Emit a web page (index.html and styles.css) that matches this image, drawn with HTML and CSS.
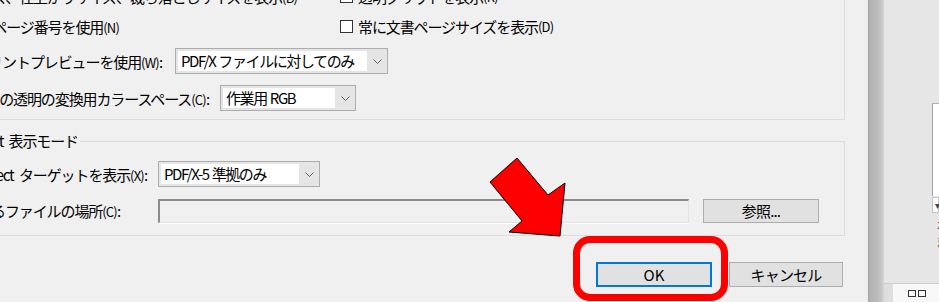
FILE: index.html
```html
<!DOCTYPE html>
<html lang="ja">
<head>
  <meta charset="UTF-8">
  <meta name="viewport" content="width=device-width, initial-scale=1.0">
  <title>環境設定 - ページ表示</title>
  <link rel="stylesheet" href="styles.css">
</head>
<body>
  <div class="screen">
    <div class="dialog">

      <!-- Page content and information -->
      <div class="group group-page">
        <div class="row row-first">
          <div class="col-left">
            <span class="fit fit-size">アートサイズ、仕上がりサイズ、裁ち落としサイズを表示<span class="key">(B)</span></span>
          </div>
          <label class="check"><span class="box"></span>透明グリッドを表示<span class="key">(R)</span></label>
        </div>
        <div class="row row-second">
          <div class="col-left">
            <span class="fit fit-page">論理ページ番号を使用<span class="key">(N)</span></span>
          </div>
          <label class="check"><span class="box"></span>常に文書ページサイズを表示<span class="key">(D)</span></label>
        </div>
        <div class="row row-combo">
          <span class="fit fit-overprint">オーバープリントプレビューを使用<span class="key">(W)</span> :</span>
          <div class="combo combo-overprint">
            <div class="combo-value">PDF/X ファイルに対してのみ</div>
            <div class="combo-arrow"><svg width="9" height="5" viewBox="0 0 9 5"><path d="M0.5 0.5 L4.5 4.5 L8.5 0.5" fill="none" stroke="#606060"/></svg></div>
          </div>
        </div>
        <div class="row row-combo">
          <span class="fit fit-blend">デフォルトの透明の変換用カラースペース<span class="key">(C)</span> :</span>
          <div class="combo combo-blend">
            <div class="combo-value">作業用 RGB</div>
            <div class="combo-arrow"><svg width="9" height="5" viewBox="0 0 9 5"><path d="M0.5 0.5 L4.5 4.5 L8.5 0.5" fill="none" stroke="#606060"/></svg></div>
          </div>
        </div>
      </div>

      <!-- Reference XObject -->
      <fieldset class="group group-xobject">
        <legend><span class="fit fit-legend">Reference XObject 表示モード</span></legend>
        <div class="row row-combo row-target">
          <span class="fit fit-target">Reference XObject ターゲットを表示<span class="key">(X)</span> :</span>
          <div class="combo combo-target">
            <div class="combo-value">PDF/X-5 準拠のみ</div>
            <div class="combo-arrow"><svg width="9" height="5" viewBox="0 0 9 5"><path d="M0.5 0.5 L4.5 4.5 L8.5 0.5" fill="none" stroke="#606060"/></svg></div>
          </div>
        </div>
        <div class="row row-path">
          <span class="fit fit-path">参照されるファイルの場所<span class="key">(C)</span> :</span>
          <div class="textbox"></div>
          <button class="btn btn-browse">参照...</button>
        </div>
      </fieldset>

      <div class="actions">
        <button class="btn btn-ok">OK</button>
        <button class="btn btn-cancel">キャンセル</button>
      </div>

      <!-- annotation -->
      <div class="highlight"></div>
      <svg class="arrow" width="90" height="90" viewBox="485 153 90 90">
        <polygon points="517,158 548,195 565,183 560,236 509,232 522,221 490,182" fill="#ff0000" stroke="#000" stroke-width="1" stroke-linejoin="miter"/>
      </svg>
    </div>

    <div class="splitter"></div>

    <div class="side">
      <div class="side-main">
        <div class="side-list"></div>
        <div class="side-combo">▾</div>
        <div class="side-text">え</div>
        <div class="side-text">ま</div>
      </div>
      <div class="side-foot">
        <div class="side-gap"></div>
        <div class="side-tab"><span class="tab-sq"></span><span class="tab-sq"></span></div>
      </div>
    </div>
  </div>
</body>
</html>
```

FILE: styles.css
```css
/* Reset */
* {
  box-sizing: border-box;
}

body {
  margin: 0;
  background: #f0f0f0;
  font-family: "Noto Sans CJK JP", "Noto Sans", sans-serif;
  font-size: 15px;
  color: #000;
  overflow: hidden;
}

.screen {
  display: flex;
  height: 302px;
}

/* Dialog */
.dialog {
  position: relative;
  width: 868px;
  flex: none;
  overflow: hidden;
  background: #f0f0f0;
}

.row {
  display: flex;
  align-items: center;
  white-space: nowrap;
  letter-spacing: -1.1px;
  word-spacing: 3px;
}

/* label text that keeps its end in place and overflows to the left */
.fit {
  display: flex;
  justify-content: flex-end;
  align-items: baseline;
  flex: none;
  white-space: nowrap;
}

.key {
  font-size: 13px;
  letter-spacing: -0.8px;
}

/* Group: page content */
.group-page {
  width: 845px;
  margin-top: -15px;
  padding-bottom: 8px;
  border-right: 1px solid #dcdcdc;
  border-bottom: 1px solid #dcdcdc;
}

.row-first {
  height: 22px;
}

.row-second {
  height: 22px;
  margin-top: 8px;
}

.row-combo {
  height: 26px;
  margin-top: 11px;
}

.col-left {
  width: 340px;
  flex: none;
}

.fit-size { width: 297px; }
.fit-page { width: 119px; }
.fit-overprint { width: 175px; padding-right: 13px; }
.fit-blend { width: 220px; padding-right: 11px; }

.check {
  display: flex;
  align-items: center;
}

.box {
  width: 13px;
  height: 13px;
  margin-right: 5px;
  border: 1px solid #333;
  background: #fff;
  flex: none;
}

/* Combo box */
.combo {
  display: flex;
  height: 26px;
  border: 1px solid #adadad;
  background: #e5e5e5;
  padding: 2px 0 2px 2px;
  flex: none;
}

.combo-value {
  flex: 1;
  background: #fff;
  padding-left: 3px;
  line-height: 20px;
  overflow: hidden;
  letter-spacing: -1.4px;
  word-spacing: 1px;
}

.combo-arrow {
  width: 20px;
  display: flex;
  align-items: center;
  justify-content: center;
}

.combo-overprint { width: 213px; }
.combo-blend { width: 136px; }
.combo-target { width: 162px; }

/* Group: Reference XObject */
.group-xobject {
  width: 845px;
  margin: 13px 0 0;
  padding: 0 0 12px;
  border: 1px solid #dcdcdc;
  border-left: none;
  min-inline-size: 0;
}

.group-xobject legend {
  padding: 0 2px 0 0;
  line-height: 16px;
  letter-spacing: -1.1px;
  word-spacing: 3px;
}

.fit-legend { width: 78px; }

.row-target {
  margin-top: 12px;
}

.fit-target { width: 158px; padding-right: 11px; }

.row-path {
  height: 25px;
  margin-top: 11px;
}

.fit-path { width: 158px; padding-right: 38px; }

.textbox {
  width: 531px;
  height: 24px;
  border-top: 2px solid #8a8a8a;
  border-left: 2px solid #8a8a8a;
  border-right: 1px solid #e3e3e3;
  border-bottom: 1px solid #e3e3e3;
  background: #f0f0f0;
  box-shadow: 0 1px 0 #fff;
}

/* Buttons */
.btn {
  height: 25px;
  padding: 0;
  border: 1px solid #adadad;
  background: #e1e1e1;
  font: inherit;
  color: #000;
  letter-spacing: -0.8px;
}

.btn-browse {
  width: 116px;
  height: 24px;
  margin-left: 14px;
}

.actions {
  display: flex;
  justify-content: flex-end;
  gap: 17px;
  margin-top: 26px;
  padding-right: 25px;
}

.btn-ok {
  width: 116px;
  border: 2px solid #0078d7;
  letter-spacing: 0;
}

.btn-cancel {
  width: 114px;
}

/* Red annotation */
.highlight {
  position: absolute;
  left: 573px;
  top: 236px;
  width: 155px;
  height: 65px;
  border: 7px solid #ff0000;
  border-radius: 17px;
}

.arrow {
  position: absolute;
  left: 485px;
  top: 153px;
}

/* Window splitter and side pane */
.splitter {
  width: 16px;
  flex: none;
  background: linear-gradient(to right, #a4a4a4 0, #b3b3b3 2px, #bcbcbc 9px, #c4c4c4 13px, #d6d6d6 16px);
}

.side {
  flex: 1;
  display: flex;
  flex-direction: column;
  background: #e6e6e6;
  overflow: hidden;
}

.side-main {
  flex: 1;
  padding: 103px 0 0 48px;
}

.side-list {
  height: 93px;
  background: #fff;
  border-top: 1px solid #b0b0b0;
  border-left: 1px solid #a0a0a0;
}

.side-combo {
  height: 16px;
  margin-top: 1px;
  background: #fff;
  border: 1px solid #c4c4c4;
  font-size: 10px;
  line-height: 13px;
  padding-left: 2px;
  color: #444;
}

.side-text {
  margin: 4px 0 0 4px;
  font-size: 12px;
  line-height: 14px;
  color: #333;
}

.side-foot {
  height: 19px;
  display: flex;
  border-top: 1px solid #cdcdcd;
}

.side-gap {
  width: 9px;
  background: #dedede;
}

.side-tab {
  flex: 1;
  display: flex;
  gap: 2px;
  align-items: center;
  padding-left: 15px;
  background: #f8f8f8;
}

.tab-sq {
  width: 8px;
  height: 7px;
  border: 1px solid #333;
}
```
